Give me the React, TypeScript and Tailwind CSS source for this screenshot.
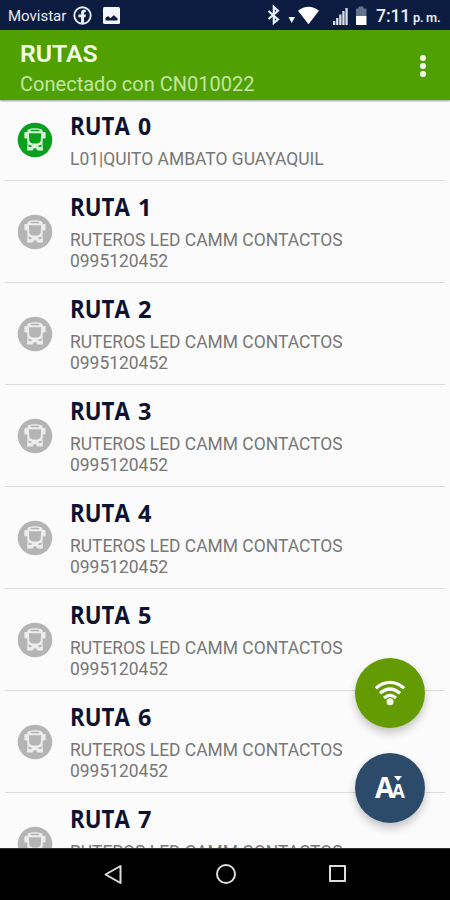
import React from "react";

const routes = [
  { name: "0", lines: ["L01|QUITO AMBATO GUAYAQUIL"], active: true },
  ...["1", "2", "3", "4", "5", "6", "7"].map((name) => ({
    name,
    lines: ["RUTEROS LED CAMM CONTACTOS", "0995120452"],
    active: false,
  })),
];

function BusIcon({ active }: { active: boolean }) {
  const fill = active ? "#08a01c" : "#b4b4b4";
  return (
    <svg width="36" height="36" viewBox="0 0 36 36" className="shrink-0">
      <circle cx="18" cy="18" r="17.3" fill={fill} />
      <g fill={active ? "#d9f2d6" : "#ededed"}>
        <path d="M11 7.5Q18 4.8 25 7.5L26.2 11.2L25.5 21.5L26 28.5H10L10.5 21.5L9.8 11.2Z" />
        <rect x="7.4" y="10" width="3" height="6.5" rx="1" />
        <rect x="25.6" y="10" width="3" height="6.5" rx="1" />
      </g>
      <g fill={fill}>
        <rect x="13.5" y="7.7" width="9" height="1.5" rx=".7" />
        <path d="M11.8 11.2H24.2L23.7 19Q22.5 21.6 18 21.6T12.3 19Z" />
        <path d="M11.5 22.6L14.8 23.8L14.3 25.3L11.5 24.7ZM24.5 22.6L21.2 23.8L21.7 25.3L24.5 24.7Z" />
        <path d="M15.5 29L16.8 26.3H19.2L20.5 29Z" />
      </g>
    </svg>
  );
}

function StatusBar() {
  return (
    <header className="flex h-[30px] shrink-0 items-center bg-[#0b1c40] text-[#e9edf5]">
      <span className="ml-2 w-[65px] whitespace-nowrap pt-[2px] text-[15px] leading-[30px]">Movistar</span>
      <svg width="19" height="19" viewBox="0 0 19 19" className="mt-px shrink-0">
        <circle cx="9.5" cy="9.5" r="8.2" fill="none" stroke="#e9edf5" strokeWidth="1.9" />
        <path d="M8 17V11.2H5.4V8.5H8V6.8Q8 3.8 11 3.8H12.8V6.3H11.8Q11 6.3 11 7.2V8.5H13L12.5 11.2H11V17Z" fill="#e9edf5" />
      </svg>
      <svg width="17" height="17" viewBox="0 0 17 17" className="ml-[11px] mt-px shrink-0">
        <rect width="17" height="17" rx="1.5" fill="#f5f7fa" />
        <path d="M2.5 13.5V11L5 9L7.5 11.3L10.7 8.3L14.5 11.3V13.5Z" fill="#0b1c40" />
      </svg>
      <div className="grow" />
      <svg width="101" height="22" viewBox="0 0 101 22" className="mr-[8px] shrink-0">
        <path d="M1.5 7L11 15.5L6.8 19V3L11 6.8L1.5 15" fill="none" stroke="#e9edf5" strokeWidth="2.2" />
        <path d="M21.5 13H28L24.7 19Z" fill="#f5f7fa" />
        <path d="M31 6.8Q41.5 -1.5 52 6.8L41.5 20.3Z" fill="#fff" />
        <g fill="#d9dfe8">
          <rect x="66" y="17" width="2.3" height="4" />
          <rect x="69.1" y="14" width="2.3" height="7" />
          <rect x="72.2" y="10.5" width="2.3" height="10.5" />
          <rect x="75.3" y="7" width="2.3" height="14" />
          <rect x="78.4" y="4" width="2.3" height="17" />
        </g>
        <path d="M89 4.5H91.5V2.5H96.5V4.5H99.5V12H89Z" fill="#66728b" />
        <rect x="89" y="12" width="10.5" height="9" fill="#fff" />
      </svg>
      <div className="flex w-[74px] shrink-0 items-baseline whitespace-nowrap pt-[2px] font-medium">
        <span className="w-[37px] text-[17.6px] tracking-[-0.1px]">7:11</span>
        <span className="text-[12.8px] font-semibold tracking-[-0.3px]">p. m.</span>
      </div>
    </header>
  );
}

function Route({ name, lines, active }: (typeof routes)[number]) {
  return (
    <li className={`mx-[5px] flex shrink-0 border-b border-[#dcdcdc] pl-[12px] ${active ? "h-[81px]" : "h-[102px]"}`}>
      <div className={active ? "pt-[22px]" : "pt-[33px]"}>
        <BusIcon active={active} />
      </div>
      <div className="ml-[17px] pt-[9px]">
        <h2 className="flex h-[32px] items-baseline whitespace-nowrap font-['Open_Sans',sans-serif] text-[25px] font-bold leading-[32px] text-[#0d1230]">
          <span className="w-[68px]">
            <span className="inline-block origin-left scale-x-[0.89]">RUTA</span>
          </span>
          <span className={name === "0" ? "text-[23px]" : "text-[23.5px]"}>{name}</span>
        </h2>
        <p className="mt-[8px] whitespace-nowrap text-[17.45px] leading-[21px] text-[#777]">
          {lines.map((line) => (
            <span key={line} className="block">{line}</span>
          ))}
        </p>
      </div>
    </li>
  );
}

export default function App() {
  return (
    <div className="relative flex h-[900px] w-[450px] flex-col overflow-hidden bg-[#fbfbfb] font-['Roboto',sans-serif]">
      <StatusBar />
      <div className="z-10 flex h-[70px] shrink-0 items-center justify-between bg-[#50a003] pl-[20px] pr-[24px] shadow-[0_1px_2px_rgba(0,0,0,0.4)]">
        <div className="whitespace-nowrap pt-[6px]">
          <h1 className="text-[24.8px] font-semibold leading-[28px] text-[#f4ffe9]">RUTAS</h1>
          <p className="mt-[3px] text-[20.05px] leading-[26px] text-[#c2e6a4]">Conectado con CN010022</p>
        </div>
        <div className="flex flex-col gap-[2px] pt-[1px]">
          <i className="size-[6px] rounded-full bg-[#f4ffe9]" />
          <i className="size-[6px] rounded-full bg-[#f4ffe9]" />
          <i className="size-[6px] rounded-full bg-[#f4ffe9]" />
        </div>
      </div>
      <ul className="flex min-h-0 grow flex-col overflow-hidden">
        {routes.map((route) => (
          <Route key={route.name} {...route} />
        ))}
      </ul>
      <nav className="flex h-[52px] shrink-0 items-center justify-between border-t border-[#333] bg-black pl-[103px] pr-[104px]">
        <svg width="20" height="22" viewBox="0 0 20 22">
          <path d="M17.5 2V19L2.5 10.5Z" fill="none" stroke="#ddd" strokeWidth="2" strokeLinejoin="round" />
        </svg>
        <div className="mb-[2px] size-[20px] rounded-full border-2 border-[#ddd]" />
        <div className="mb-[2px] size-[17px] rounded-[1px] border-2 border-[#ddd]" />
      </nav>
      <div className="absolute right-[25px] top-[658px] flex flex-col gap-[25px]">
        <button className="flex size-[70px] items-center justify-center rounded-full bg-[#659b02] shadow-[0_5px_8px_rgba(0,0,0,0.22)]">
          <svg width="32" height="28" viewBox="0 0 32 28" fill="none" stroke="#fff" strokeWidth="3.3">
            <path d="M1.8 9.2Q16 -2.4 30.2 9.2M6 14.2Q16 5.7 26 14.2M10.1 19Q16 13.7 21.9 19" />
            <circle cx="16" cy="22.8" r="3.5" fill="#f5faea" stroke="none" />
          </svg>
        </button>
        <button className="flex size-[70px] items-center justify-center rounded-full bg-[#2c4b6b] font-['Open_Sans',sans-serif] font-bold text-white shadow-[0_5px_8px_rgba(0,0,0,0.22)]">
          <span className="relative flex items-baseline pt-[2px]">
            <span className="text-[28px] font-bold leading-[30px] tracking-[-2.5px]">A</span>
            <span className="text-[19px] leading-[30px]">A</span>
            <svg className="absolute right-[3px] top-[6px]" width="8" height="5" viewBox="0 0 8 5">
              <path d="M0 0H8L4 5Z" fill="#fff" />
            </svg>
          </span>
        </button>
      </div>
    </div>
  );
}
